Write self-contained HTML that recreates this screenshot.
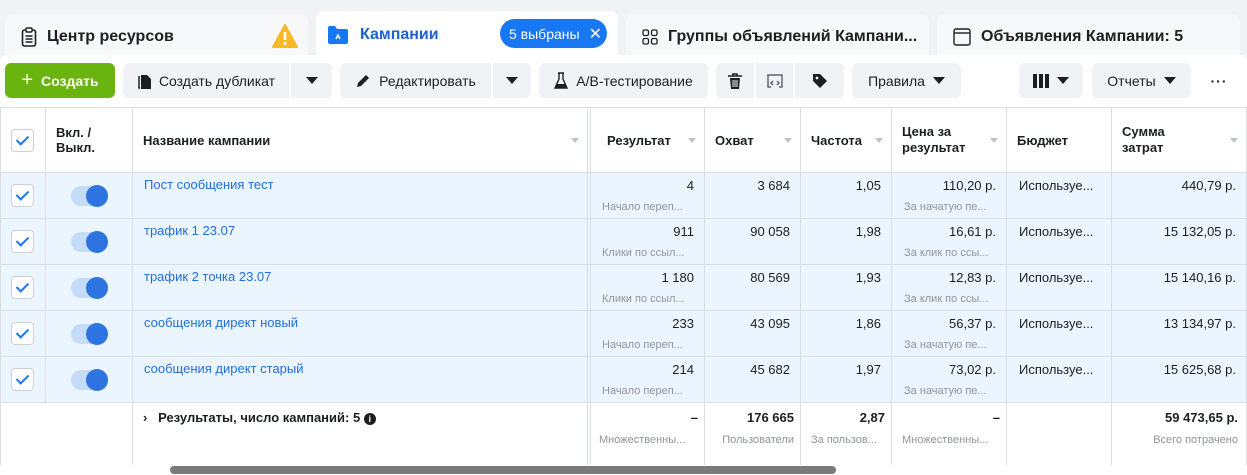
<!DOCTYPE html>
<html><head><meta charset="utf-8"><style>
*{box-sizing:border-box;margin:0;padding:0}
body{width:1247px;height:475px;overflow:hidden;background:#f0f2f5;font-family:"Liberation Sans",sans-serif;color:#1c1e21;position:relative}
.tab{position:absolute;top:14px;height:45px;background:#f7f8fa;border-radius:8px 8px 0 0;font-weight:bold;font-size:16px;display:flex;align-items:center;padding-left:16px;gap:10px}
.tb{position:absolute;top:55px;left:0;width:1247px;height:52px;background:#fff;border-radius:6px 6px 0 0}
.btn{position:absolute;top:63px;height:35px;background:#f0f2f5;border-radius:6px;font-size:14px;display:flex;align-items:center;justify-content:center;gap:8px;color:#1c1e21}
.dd{width:0;height:0;border-left:6px solid transparent;border-right:6px solid transparent;border-top:7px solid #1c1e21}
table{position:absolute;top:107px;left:0;border-collapse:collapse;table-layout:fixed;background:#fff;font-size:13px}
td,th{border:1px solid #dadde1;vertical-align:top;overflow:hidden;white-space:nowrap}
th{height:65px;font-weight:bold;font-size:13px;text-align:left;vertical-align:middle;padding:0 10px;position:relative}
th .s{position:absolute;right:8px;top:30px;border-left:4px solid transparent;border-right:4px solid transparent;border-top:5px solid #bec3c9}
tr.r td{background:#ebf5ff;height:46px}
tr.r td.n{text-align:right;padding:5px 10px 0 6px}
.sub{font-size:11px;color:#90949c;margin-top:8px}
.cb{width:23px;height:23px;border:1px solid #ccd0d5;border-radius:4px;background:#fff;margin:11px 0 0 10px;position:relative}
.cb:after{content:"";position:absolute;left:7px;top:3px;width:5px;height:10px;border:solid #1877f2;border-width:0 2px 2px 0;transform:rotate(45deg)}
.tg{width:36px;height:20px;border-radius:10px;background:#c4dcf8;margin:13px 0 0 25px;position:relative}
.tg:after{content:"";position:absolute;right:-1px;top:-1px;width:22px;height:22px;border-radius:50%;background:#2d74e0}
.lnk{color:#216fdb;padding:4px 0 0 11px;display:block}
</style></head><body>
<div class="tab" style="left:5px;width:303px"><svg width="16" height="20" viewBox="0 0 16 20"><rect x="1.5" y="3" width="13" height="16" rx="2" fill="none" stroke="#1c1e21" stroke-width="1.6"/><rect x="5" y="1" width="6" height="4" rx="1" fill="#fff" stroke="#1c1e21" stroke-width="1.4"/><path d="M4.5 9h7M4.5 12h7M4.5 15h7" stroke="#1c1e21" stroke-width="1.4"/></svg><span>Центр ресурсов</span>
<svg style="position:absolute;right:10px;top:10px" width="26" height="24" viewBox="0 0 26 24"><path d="M13 1L25 23H1Z" fill="#f7b928" stroke="#f7b928" stroke-linejoin="round" stroke-width="2"/><path d="M13 8v8" stroke="#fff" stroke-width="2.6"/><circle cx="13" cy="19.5" r="1.5" fill="#fff"/></svg></div>
<div class="tab" style="left:316px;width:302px;top:11px;height:48px;background:#fff;color:#1a63d1;padding-left:12px"><svg width="20" height="18" viewBox="0 0 20 18"><path d="M0 2a2 2 0 012-2h5l2 3h9a2 2 0 012 2v11a2 2 0 01-2 2H2a2 2 0 01-2-2z" fill="#1877f2"/><path d="M8 13l2-4 2 4" stroke="#fff" stroke-width="1.4" fill="none"/></svg><span style="margin-left:2px">Кампании</span>
<div style="position:absolute;left:184px;top:8px;width:107px;height:29px;background:#1877f2;border-radius:15px;color:#fff;font-weight:normal;font-size:14px;display:flex;align-items:center;padding-left:9px">5 выбраны <span style="margin-left:9px;font-size:16px">✕</span></div></div>
<div class="tab" style="left:626px;width:303px"><svg width="16" height="16" viewBox="0 0 16 16" fill="none" stroke="#1c1e21" stroke-width="1.3"><rect x="1" y="1" width="5.5" height="5.5" rx="1.5"/><rect x="9.5" y="1" width="5.5" height="5.5" rx="1.5"/><rect x="1" y="9.5" width="5.5" height="5.5" rx="1.5"/><rect x="9.5" y="9.5" width="5.5" height="5.5" rx="1.5"/></svg><span>Группы объявлений Кампани...</span></div>
<div class="tab" style="left:937px;width:303px"><svg width="18" height="18" viewBox="0 0 18 18" fill="none" stroke="#1c1e21" stroke-width="1.4"><rect x="1" y="1" width="16" height="16" rx="2"/><path d="M1 5h16"/></svg><span>Объявления Кампании: 5</span></div>
<div class="tb"></div>
<div class="btn" style="left:5px;width:110px;background:#69b40f;color:#fff;font-weight:bold"><span style="font-size:20px;font-weight:normal">+</span>Создать</div>
<div class="btn" style="left:123px;width:166px;border-radius:6px 0 0 6px"><svg width="14" height="16" viewBox="0 0 14 16"><path d="M4 2h6l4 4v10H4z" fill="#1c1e21"/><path d="M2 3v12h1" stroke="#1c1e21" stroke-width="1.5" fill="none"/></svg>Создать дубликат</div>
<div class="btn" style="left:291px;width:41px;border-radius:0 6px 6px 0"><div class="dd"></div></div>
<div class="btn" style="left:340px;width:151px;border-radius:6px 0 0 6px"><svg width="16" height="16" viewBox="0 0 16 16"><path d="M2 14l1-4 8-8 3 3-8 8z" fill="#1c1e21"/></svg>Редактировать</div>
<div class="btn" style="left:493px;width:38px;border-radius:0 6px 6px 0"><div class="dd"></div></div>
<div class="btn" style="left:539px;width:169px"><svg width="14" height="18" viewBox="0 0 14 18"><path d="M4 1h6M5 1v6L1 16h12L9 7V1" fill="none" stroke="#1c1e21" stroke-width="1.4"/><path d="M2.5 12h9l1.5 4H1z" fill="#1c1e21"/></svg>A/B-тестирование</div>
<div class="btn" style="left:716px;width:38px;border-radius:6px 0 0 6px"><svg width="14" height="16" viewBox="0 0 14 16"><path d="M0 3h14M5 3V1h4v2" stroke="#1c1e21" stroke-width="1.6" fill="none"/><path d="M2 5h10l-1 11H3z" fill="#1c1e21"/><path d="M5 7v7M7 7v7M9 7v7" stroke="#f0f2f5"/></svg></div>
<div class="btn" style="left:756px;width:37px;border-radius:0"><svg width="18" height="16" viewBox="0 0 18 16" fill="none" stroke="#606770" stroke-width="1.5"><path d="M5 14H2V2h14v12h-3"/><path d="M7 8l-2 2 2 2M11 8l2 2-2 2"/></svg></div>
<div class="btn" style="left:795px;width:49px;border-radius:0 6px 6px 0"><svg width="16" height="16" viewBox="0 0 16 16"><path d="M1 1h7l7 7-7 7-7-7z" fill="#1c1e21"/><circle cx="5" cy="5" r="1.4" fill="#f0f2f5"/></svg></div>
<div class="btn" style="left:852px;width:109px">Правила <div class="dd"></div></div>
<div class="btn" style="left:1019px;width:64px"><svg width="16" height="14"><rect x="0" y="0" width="4" height="14" fill="#1c1e21"/><rect x="6" y="0" width="4" height="14" fill="#1c1e21"/><rect x="12" y="0" width="4" height="14" fill="#1c1e21"/></svg><div class="dd"></div></div>
<div class="btn" style="left:1092px;width:99px">Отчеты <div class="dd"></div></div>
<div class="btn" style="left:1199px;width:40px;background:#fff;font-weight:bold;letter-spacing:1px">···</div>
<table style="width:1246px">
<colgroup><col style="width:45px"><col style="width:87px"><col style="width:455px"><col style="width:3px"><col style="width:114px"><col style="width:96px"><col style="width:91px"><col style="width:115px"><col style="width:105px"><col style="width:135px"></colgroup>
<tr><th style="padding:0"><div class="cb" style="margin-top:0"></div></th><th style="line-height:15px">Вкл. /<br>Выкл.</th><th>Название кампании<span class="s"></span></th><th style="padding:0;background:#fff"></th><th style="padding-left:16px">Результат<span class="s"></span></th><th>Охват<span class="s"></span></th><th>Частота<span class="s"></span></th><th style="line-height:16px">Цена за<br>результат<span class="s"></span></th><th>Бюджет</th><th style="line-height:16px">Сумма<br>затрат<span class="s"></span></th></tr>
<tr class="r"><td><div class="cb"></div></td><td><div class="tg"></div></td><td><span class="lnk">Пост сообщения тест</span></td><td></td><td class="n">4<div class="sub" style="text-align:left;padding-left:5px">Начало переп...</div></td><td class="n">3 684</td><td class="n">1,05</td><td class="n">110,20 р.<div class="sub" style="text-align:left;padding-left:6px">За начатую пе...</div></td><td style="padding:5px 0 0 12px">Используе...</td><td class="n">440,79 р.</td></tr>
<tr class="r"><td><div class="cb"></div></td><td><div class="tg"></div></td><td><span class="lnk">трафик 1 23.07</span></td><td></td><td class="n">911<div class="sub" style="text-align:left;padding-left:5px">Клики по ссыл...</div></td><td class="n">90 058</td><td class="n">1,98</td><td class="n">16,61 р.<div class="sub" style="text-align:left;padding-left:6px">За клик по ссы...</div></td><td style="padding:5px 0 0 12px">Используе...</td><td class="n">15 132,05 р.</td></tr>
<tr class="r"><td><div class="cb"></div></td><td><div class="tg"></div></td><td><span class="lnk">трафик 2 точка 23.07</span></td><td></td><td class="n">1 180<div class="sub" style="text-align:left;padding-left:5px">Клики по ссыл...</div></td><td class="n">80 569</td><td class="n">1,93</td><td class="n">12,83 р.<div class="sub" style="text-align:left;padding-left:6px">За клик по ссы...</div></td><td style="padding:5px 0 0 12px">Используе...</td><td class="n">15 140,16 р.</td></tr>
<tr class="r"><td><div class="cb"></div></td><td><div class="tg"></div></td><td><span class="lnk">сообщения директ новый</span></td><td></td><td class="n">233<div class="sub" style="text-align:left;padding-left:5px">Начало переп...</div></td><td class="n">43 095</td><td class="n">1,86</td><td class="n">56,37 р.<div class="sub" style="text-align:left;padding-left:6px">За начатую пе...</div></td><td style="padding:5px 0 0 12px">Используе...</td><td class="n">13 134,97 р.</td></tr>
<tr class="r"><td><div class="cb"></div></td><td><div class="tg"></div></td><td><span class="lnk">сообщения директ старый</span></td><td></td><td class="n">214<div class="sub" style="text-align:left;padding-left:5px">Начало переп...</div></td><td class="n">45 682</td><td class="n">1,97</td><td class="n">73,02 р.<div class="sub" style="text-align:left;padding-left:6px">За начатую пе...</div></td><td style="padding:5px 0 0 12px">Используе...</td><td class="n">15 625,68 р.</td></tr>
<tr style="height:63px;font-weight:bold"><td style="border-right:none"></td><td style="border-left:none"></td><td style="padding:7px 0 0 10px">›&nbsp;&nbsp;&nbsp;Результаты, число кампаний: 5 <span style="display:inline-block;width:12px;height:12px;border-radius:50%;background:#1c1e21;color:#fff;font-size:9px;text-align:center;line-height:12px">i</span></td><td></td>
<td style="text-align:right;padding:7px 6px 0 0">–<div class="sub" style="font-weight:normal;text-align:left;padding-left:8px;margin-top:9px">Множественны...</div></td>
<td style="text-align:right;padding:7px 6px 0 0">176 665<div class="sub" style="font-weight:normal;margin-top:9px">Пользователи</div></td>
<td style="text-align:right;padding:7px 6px 0 0">2,87<div class="sub" style="font-weight:normal;text-align:left;padding-left:10px;margin-top:9px">За пользов...</div></td>
<td style="text-align:right;padding:7px 6px 0 0">–<div class="sub" style="font-weight:normal;text-align:left;padding-left:10px;margin-top:9px">Множественны...</div></td><td></td>
<td style="text-align:right;padding:7px 8px 0 0">59 473,65 р.<div class="sub" style="font-weight:normal;margin-top:9px">Всего потрачено</div></td></tr>
</table>
<div style="position:absolute;left:0;top:465px;width:1247px;height:10px;background:#fff"></div>
<div style="position:absolute;left:170px;top:466px;width:666px;height:8px;background:#7a7a7a;border-radius:4px"></div>
</body></html>
